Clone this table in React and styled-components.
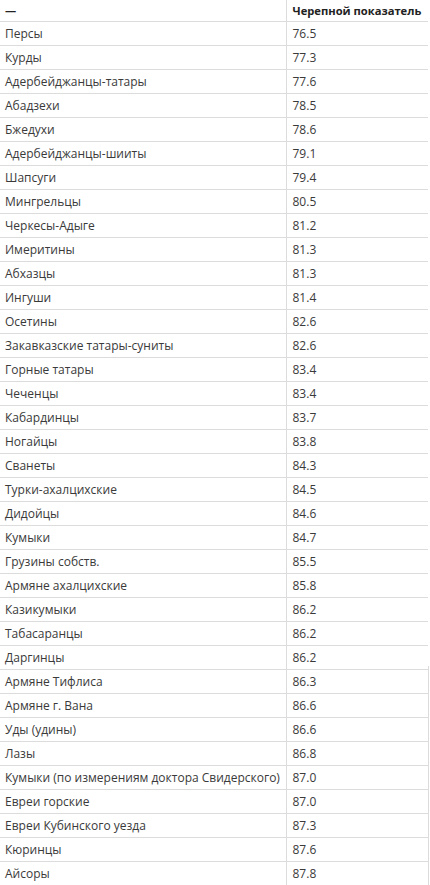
import styled, { createGlobalStyle } from "styled-components";

const Global = createGlobalStyle`
    body {
        margin: 0;
        background: #fff;
        font-family: "Open Sans", "Noto Sans", sans-serif;
    }
`;

const Wrap = styled.div`
    position: relative;
    width: 428px;

    &::after {
        content: "";
        position: absolute;
        top: 666px;
        bottom: 0;
        right: -1px;
        width: 1px;
        background: #dcdcdc;
    }
`;

const Table = styled.table`
    width: 428px;
    table-layout: fixed;
    border-collapse: collapse;
    font-size: 12px;
    color: #3a3a3a;
`;

const Head = styled.th`
    height: 21px;
    padding: 1px 5px 0 ${p => (p.$first ? "5px" : "6px")};
    text-align: left;
    font-size: 11.2px;
    font-weight: 700;
    color: #222;
    white-space: nowrap;
    border-bottom: 1px solid #dcdcdc;
    border-left: ${p => (p.$first ? "none" : "1px solid #dcdcdc")};
    width: ${p => (p.$first ? "286px" : "auto")};
    box-sizing: border-box;
`;

const Cell = styled.td`
    height: 23px;
    padding: 0 5px 0 ${p => (p.$first ? "5px" : "6px")};
    border-bottom: 1px solid #dcdcdc;
    border-left: ${p => (p.$first ? "none" : "1px solid #dcdcdc")};
    white-space: nowrap;
`;

const rows = [
    ["Персы", "76.5"],
    ["Курды", "77.3"],
    ["Адербейджанцы-татары", "77.6"],
    ["Абадзехи", "78.5"],
    ["Бжедухи", "78.6"],
    ["Адербейджанцы-шииты", "79.1"],
    ["Шапсуги", "79.4"],
    ["Мингрельцы", "80.5"],
    ["Черкесы-Адыге", "81.2"],
    ["Имеритины", "81.3"],
    ["Абхазцы", "81.3"],
    ["Ингуши", "81.4"],
    ["Осетины", "82.6"],
    ["Закавказские татары-суниты", "82.6"],
    ["Горные татары", "83.4"],
    ["Чеченцы", "83.4"],
    ["Кабардинцы", "83.7"],
    ["Ногайцы", "83.8"],
    ["Сванеты", "84.3"],
    ["Турки-ахалцихские", "84.5"],
    ["Дидойцы", "84.6"],
    ["Кумыки", "84.7"],
    ["Грузины собств.", "85.5"],
    ["Армяне ахалцихские", "85.8"],
    ["Казикумыки", "86.2"],
    ["Табасаранцы", "86.2"],
    ["Даргинцы", "86.2"],
    ["Армяне Тифлиса", "86.3"],
    ["Армяне г. Вана", "86.6"],
    ["Уды (удины)", "86.6"],
    ["Лазы", "86.8"],
    ["Кумыки (по измерениям доктора Свидерского)", "87.0"],
    ["Евреи горские", "87.0"],
    ["Евреи Кубинского уезда", "87.3"],
    ["Кюринцы", "87.6"],
    ["Айсоры", "87.8"],
];

export default function App() {
    return <>
        <Global />
        <Wrap>
            <Table>
                <thead>
                    <tr>
                        <Head $first>—</Head>
                        <Head>Черепной показатель</Head>
                    </tr>
                </thead>
                <tbody>
                    {rows.map(([name, value]) => (
                        <tr key={name + value}>
                            <Cell $first>{name}</Cell>
                            <Cell>{value}</Cell>
                        </tr>
                    ))}
                </tbody>
            </Table>
        </Wrap>
    </>;
}
